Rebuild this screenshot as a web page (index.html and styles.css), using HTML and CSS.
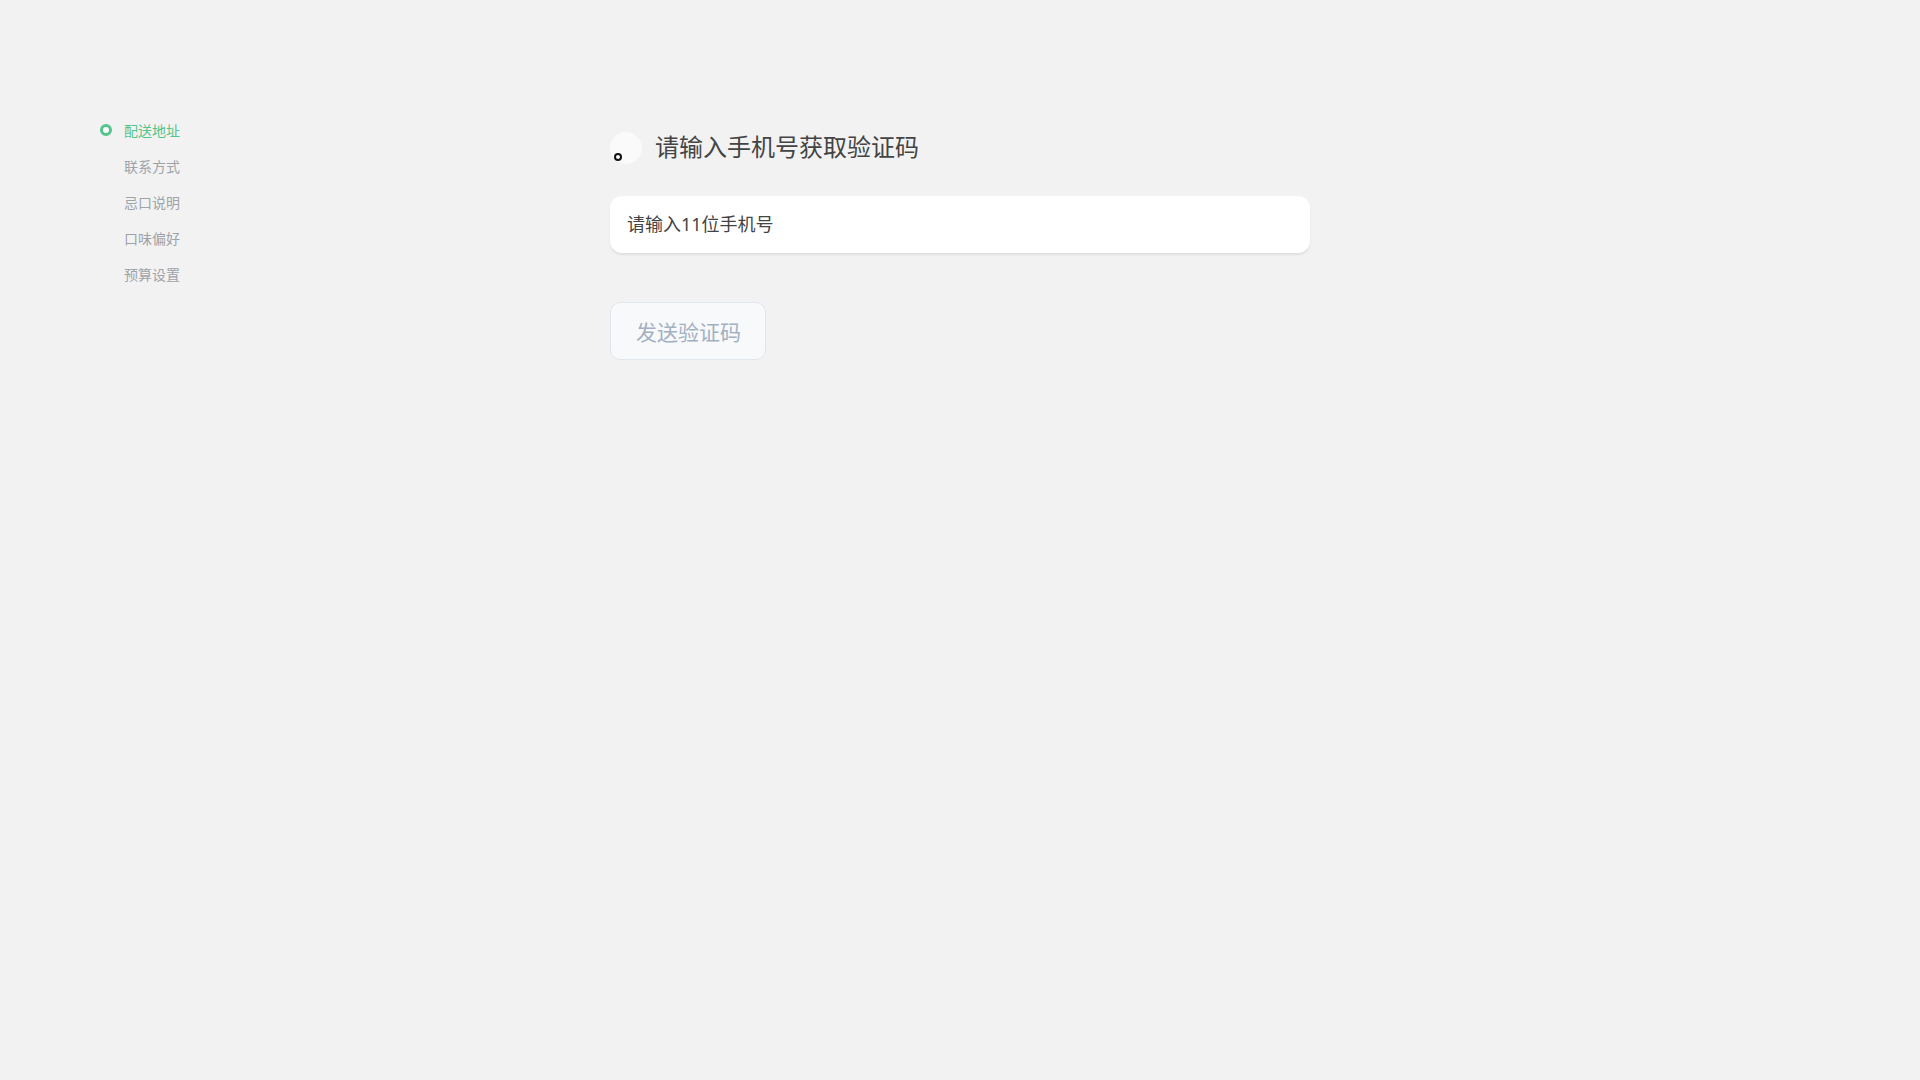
FILE: index.html
```html
<!DOCTYPE html>
<html lang="zh-CN">
<head>
<meta charset="utf-8">
<title>配送设置</title>
<link rel="stylesheet" href="styles.css">
</head>
<body>
<div class="page">
  <nav class="steps">
    <div class="step active"><span class="dot"></span>配送地址</div>
    <div class="step">联系方式</div>
    <div class="step">忌口说明</div>
    <div class="step">口味偏好</div>
    <div class="step">预算设置</div>
  </nav>
  <main class="main">
    <div class="title-row">
      <span class="avatar"><span class="ring"></span></span>
      <h1 class="title">请输入手机号获取验证码</h1>
    </div>
    <div class="field">请输入11位手机号</div>
    <button class="send" type="button">发送验证码</button>
  </main>
</div>
</body>
</html>
```
FILE: styles.css
```css
* { box-sizing: border-box; }
html, body { margin: 0; padding: 0; }
body {
  background: #f2f2f2;
  font-family: "Noto Sans", "Noto Sans CJK SC", sans-serif;
  width: 1920px;
  height: 1080px;
}
.page {
  display: flex;
  padding: 113px 0 0 100px;
}
.steps {
  width: 510px;
  display: flex;
  flex-direction: column;
}
.step {
  position: relative;
  height: 36px;
  line-height: 36px;
  padding-left: 24px;
  font-size: 14px;
  color: #9ea3aa;
}
.step.active { color: #52c48c; }
.dot {
  position: absolute;
  left: 0;
  top: 11px;
  width: 12px;
  height: 12px;
  border-radius: 50%;
  border: 3px solid #52c48c;
  background: #ffffff;
}
.main {
  padding-top: 19px;
  display: flex;
  flex-direction: column;
  align-items: flex-start;
}
.title-row {
  display: flex;
  align-items: center;
  gap: 13px;
  height: 32px;
}
.avatar {
  position: relative;
  width: 32px;
  height: 32px;
  border-radius: 50%;
  background: #fafafa;
  flex: none;
}
.ring {
  position: absolute;
  left: 4px;
  top: 21px;
  width: 8px;
  height: 8px;
  border-radius: 50%;
  border: 2px solid #111;
  background: #fff;
}
.title {
  margin: 0 0 3px;
  font-size: 24px;
  font-weight: 400;
  color: #444;
  line-height: 32px;
}
.field {
  margin-top: 32px;
  width: 700px;
  height: 57px;
  padding: 0 17px 4px;
  display: flex;
  align-items: center;
  background: #fff;
  border-radius: 12px;
  box-shadow: 0 2px 2px rgba(0,0,0,0.08);
  font-size: 18px;
  color: #444;
}
.send {
  margin-top: 49px;
  height: 58px;
  padding: 0 24px 0 25px;
  border: 1px solid #e1e7ef;
  border-radius: 10px;
  background: #f7f9fb;
  font-family: inherit;
  font-size: 21px;
  color: #a3b0c2;
}
```
